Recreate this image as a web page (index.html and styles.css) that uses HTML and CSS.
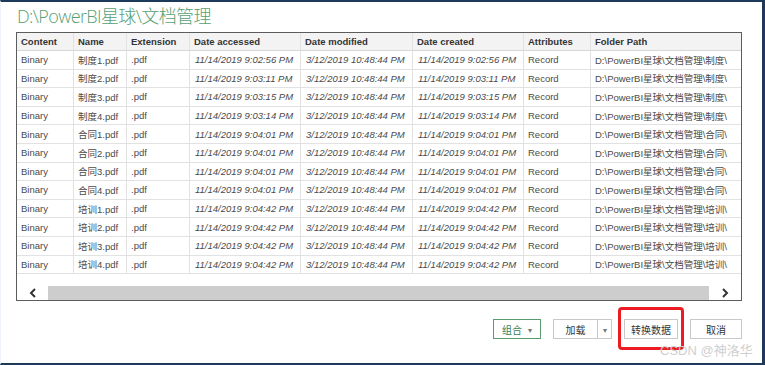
FILE: index.html
```html
<!DOCTYPE html>
<html lang="zh-CN">
<head>
  <meta charset="UTF-8" />
  <meta name="viewport" content="width=device-width, initial-scale=1.0" />
  <title>导航器</title>
  <link rel="stylesheet" href="styles.css">
</head>
<body>
  <div class="dialog">
    <h1 class="title">D:\PowerBI星球\文档管理</h1>

    <div class="grid">
      <div class="row head">
        <div class="cell">Content</div>
        <div class="cell">Name</div>
        <div class="cell">Extension</div>
        <div class="cell">Date accessed</div>
        <div class="cell">Date modified</div>
        <div class="cell">Date created</div>
        <div class="cell">Attributes</div>
        <div class="cell">Folder Path</div>
      </div>

      <div class="row">
        <div class="cell">Binary</div><div class="cell">制度1.pdf</div><div class="cell">.pdf</div>
        <div class="cell date">11/14/2019 9:02:56 PM</div><div class="cell date">3/12/2019 10:48:44 PM</div><div class="cell date">11/14/2019 9:02:56 PM</div>
        <div class="cell">Record</div><div class="cell">D:\PowerBI星球\文档管理\制度\</div>
      </div>
      <div class="row">
        <div class="cell">Binary</div><div class="cell">制度2.pdf</div><div class="cell">.pdf</div>
        <div class="cell date">11/14/2019 9:03:11 PM</div><div class="cell date">3/12/2019 10:48:44 PM</div><div class="cell date">11/14/2019 9:03:11 PM</div>
        <div class="cell">Record</div><div class="cell">D:\PowerBI星球\文档管理\制度\</div>
      </div>
      <div class="row">
        <div class="cell">Binary</div><div class="cell">制度3.pdf</div><div class="cell">.pdf</div>
        <div class="cell date">11/14/2019 9:03:15 PM</div><div class="cell date">3/12/2019 10:48:44 PM</div><div class="cell date">11/14/2019 9:03:15 PM</div>
        <div class="cell">Record</div><div class="cell">D:\PowerBI星球\文档管理\制度\</div>
      </div>
      <div class="row">
        <div class="cell">Binary</div><div class="cell">制度4.pdf</div><div class="cell">.pdf</div>
        <div class="cell date">11/14/2019 9:03:14 PM</div><div class="cell date">3/12/2019 10:48:44 PM</div><div class="cell date">11/14/2019 9:03:14 PM</div>
        <div class="cell">Record</div><div class="cell">D:\PowerBI星球\文档管理\制度\</div>
      </div>
      <div class="row">
        <div class="cell">Binary</div><div class="cell">合同1.pdf</div><div class="cell">.pdf</div>
        <div class="cell date">11/14/2019 9:04:01 PM</div><div class="cell date">3/12/2019 10:48:44 PM</div><div class="cell date">11/14/2019 9:04:01 PM</div>
        <div class="cell">Record</div><div class="cell">D:\PowerBI星球\文档管理\合同\</div>
      </div>
      <div class="row">
        <div class="cell">Binary</div><div class="cell">合同2.pdf</div><div class="cell">.pdf</div>
        <div class="cell date">11/14/2019 9:04:01 PM</div><div class="cell date">3/12/2019 10:48:44 PM</div><div class="cell date">11/14/2019 9:04:01 PM</div>
        <div class="cell">Record</div><div class="cell">D:\PowerBI星球\文档管理\合同\</div>
      </div>
      <div class="row">
        <div class="cell">Binary</div><div class="cell">合同3.pdf</div><div class="cell">.pdf</div>
        <div class="cell date">11/14/2019 9:04:01 PM</div><div class="cell date">3/12/2019 10:48:44 PM</div><div class="cell date">11/14/2019 9:04:01 PM</div>
        <div class="cell">Record</div><div class="cell">D:\PowerBI星球\文档管理\合同\</div>
      </div>
      <div class="row">
        <div class="cell">Binary</div><div class="cell">合同4.pdf</div><div class="cell">.pdf</div>
        <div class="cell date">11/14/2019 9:04:01 PM</div><div class="cell date">3/12/2019 10:48:44 PM</div><div class="cell date">11/14/2019 9:04:01 PM</div>
        <div class="cell">Record</div><div class="cell">D:\PowerBI星球\文档管理\合同\</div>
      </div>
      <div class="row">
        <div class="cell">Binary</div><div class="cell">培训1.pdf</div><div class="cell">.pdf</div>
        <div class="cell date">11/14/2019 9:04:42 PM</div><div class="cell date">3/12/2019 10:48:44 PM</div><div class="cell date">11/14/2019 9:04:42 PM</div>
        <div class="cell">Record</div><div class="cell">D:\PowerBI星球\文档管理\培训\</div>
      </div>
      <div class="row">
        <div class="cell">Binary</div><div class="cell">培训2.pdf</div><div class="cell">.pdf</div>
        <div class="cell date">11/14/2019 9:04:42 PM</div><div class="cell date">3/12/2019 10:48:44 PM</div><div class="cell date">11/14/2019 9:04:42 PM</div>
        <div class="cell">Record</div><div class="cell">D:\PowerBI星球\文档管理\培训\</div>
      </div>
      <div class="row">
        <div class="cell">Binary</div><div class="cell">培训3.pdf</div><div class="cell">.pdf</div>
        <div class="cell date">11/14/2019 9:04:42 PM</div><div class="cell date">3/12/2019 10:48:44 PM</div><div class="cell date">11/14/2019 9:04:42 PM</div>
        <div class="cell">Record</div><div class="cell">D:\PowerBI星球\文档管理\培训\</div>
      </div>
      <div class="row">
        <div class="cell">Binary</div><div class="cell">培训4.pdf</div><div class="cell">.pdf</div>
        <div class="cell date">11/14/2019 9:04:42 PM</div><div class="cell date">3/12/2019 10:48:44 PM</div><div class="cell date">11/14/2019 9:04:42 PM</div>
        <div class="cell">Record</div><div class="cell">D:\PowerBI星球\文档管理\培训\</div>
      </div>

      <div class="spacer"></div>

      <div class="hscroll">
        <span class="arrow">
          <svg width="10" height="10" viewBox="0 0 10 10"><polyline points="7,1 3,5 7,9" fill="none" stroke="#333" stroke-width="2"/></svg>
        </span>
        <span class="thumb"></span>
        <span class="arrow">
          <svg width="10" height="10" viewBox="0 0 10 10"><polyline points="3,1 7,5 3,9" fill="none" stroke="#333" stroke-width="2"/></svg>
        </span>
      </div>
    </div>

    <div class="actions">
      <button class="btn combine">组合 <span class="caret">▾</span></button>
      <div class="split">
        <button class="btn load">加载</button>
        <button class="btn drop"><span class="caret">▾</span></button>
      </div>
      <button class="btn transform">转换数据</button>
      <button class="btn cancel">取消</button>
    </div>

    <div class="highlight"></div>
    <div class="watermark">CSDN @神洛华</div>
  </div>
</body>
</html>
```

FILE: styles.css
```css
body {
  margin: 0;
  padding: 0;
  background: #fff;
  font-family: "Liberation Sans", "Noto Sans CJK SC", sans-serif;
  color: #333;
}

.dialog {
  position: relative;
  width: 765px;
  height: 365px;
  box-sizing: border-box;
  border-top: 2px solid #1d3a5a;
  border-right: 3px solid #1d3a5a;
  border-bottom: 2px solid #1d3a5a;
  border-left: 1px solid #eef4fa;
  padding-left: 15px;
  background: #fff;
}

.title {
  margin: 3px 0 0 1px;
  font-family: "Open Sans", "Noto Sans CJK SC", sans-serif;
  font-size: 18px;
  line-height: 22px;
  font-weight: 300;
  letter-spacing: -0.6px;
  color: #58a074;
}

.grid {
  margin-top: 5px;
  width: 726px;
  height: 269px;
  box-sizing: border-box;
  border: 1px solid #5c5c5c;
  overflow: hidden;
  display: flex;
  flex-direction: column;
}

.row {
  display: grid;
  grid-template-columns: 57px 53px 63px 111px 112px 111px 67px 170px;
  height: 18.6px;
  flex: none;
  box-sizing: border-box;
  border-bottom: 1px solid #e2e2e2;
  font-size: 9.5px;
  color: #4a4a4a;
}

.row.head {
  height: 18px;
  background: #f3f3f3;
  font-weight: bold;
  color: #333;
  border-bottom-color: #d6d6d6;
}

.cell {
  box-sizing: border-box;
  border-right: 1px solid #e2e2e2;
  padding: 0 4px;
  display: flex;
  align-items: center;
  white-space: nowrap;
  overflow: hidden;
}

.cell.date {
  font-style: italic;
  padding-left: 5px;
}

.spacer {
  flex: 1;
}

.hscroll {
  flex: none;
  height: 14px;
  display: flex;
}

.arrow {
  width: 31px;
  display: flex;
  align-items: center;
  justify-content: center;
  background: #fff;
}

.arrow:last-child {
  width: 32px;
}

.thumb {
  flex: 1;
  background: #cdcdcd;
}

.actions {
  margin-top: 18px;
  width: 726px;
  display: flex;
  justify-content: flex-end;
  gap: 12px;
}

.btn {
  height: 20px;
  box-sizing: border-box;
  border: 1px solid #c9c9c9;
  background: #fff;
  font-family: "Noto Sans CJK SC", sans-serif;
  font-size: 10px;
  color: #333;
  padding: 0;
  display: flex;
  align-items: center;
  justify-content: center;
}

.caret {
  font-size: 8px;
  color: #777;
  margin-left: 6px;
}

.combine {
  width: 48px;
  border-color: #5a9a6e;
  color: #3a7d53;
}

.split {
  display: flex;
}

.load {
  width: 45px;
}

.drop {
  width: 14px;
  border-left: none;
}

.drop .caret {
  margin-left: 0;
}

.transform {
  width: 54px;
}

.cancel {
  width: 52px;
}

.highlight {
  position: absolute;
  left: 617px;
  top: 305px;
  width: 66px;
  height: 43px;
  box-sizing: border-box;
  border: 3px solid #ec1c24;
  border-radius: 4px;
}

.watermark {
  position: absolute;
  left: 659px;
  top: 341px;
  font-size: 13px;
  line-height: 16px;
  color: #cfcfcf;
  font-family: "Liberation Sans", "Noto Sans CJK SC", sans-serif;
  white-space: nowrap;
}
```
